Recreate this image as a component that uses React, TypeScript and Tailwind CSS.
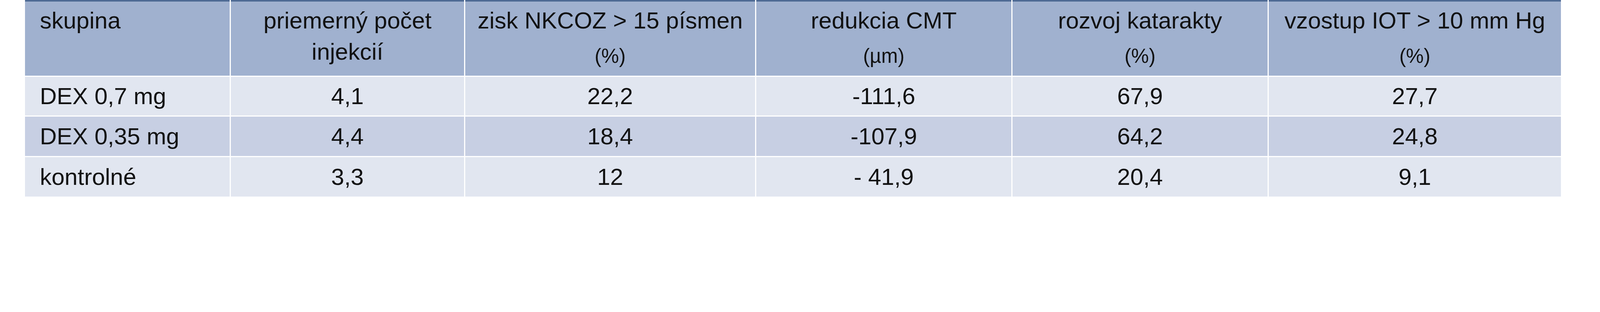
import React from "react";

const font = { fontFamily: "'Liberation Sans', Arial, sans-serif" };

type Head = { title: string; unit?: string; left?: boolean; wrap?: boolean };

const heads: Head[] = [
  { title: "skupina", left: true },
  { title: "priemerný počet injekcií", wrap: true },
  { title: "zisk NKCOZ > 15 písmen", unit: "(%)" },
  { title: "redukcia CMT", unit: "(µm)" },
  { title: "rozvoj katarakty", unit: "(%)" },
  { title: "vzostup IOT > 10 mm Hg", unit: "(%)" },
];

const rows: string[][] = [
  ["DEX 0,7 mg", "4,1", "22,2", "-111,6", "67,9", "27,7"],
  ["DEX 0,35 mg", "4,4", "18,4", "-107,9", "64,2", "24,8"],
  ["kontrolné", "3,3", "12", "- 41,9", "20,4", "9,1"],
];

export default function App() {
  return (
    <div className="w-full h-[619px] bg-white pl-[64px] text-[#111111]" style={font}>
      <div className="grid grid-cols-[524px_597px_742px_653px_653px_748px] grid-rows-[194px_99px_101px_101px] gap-[3px] w-[3932px]">
        {heads.map((h, i) => (
          <div
            key={i}
            className={
              "border-t-[4px] border-[#4e6a94] bg-[#a0b1cf] pt-[9px] flex flex-col " +
              (h.left ? "items-start pl-[38px]" : "items-center")
            }
          >
            <div
              className={
                "text-[60px] leading-[80px] " +
                (h.left ? "text-left whitespace-nowrap" : "text-center") +
                (h.wrap ? " max-w-[480px]" : " whitespace-nowrap")
              }
            >
              {h.title}
            </div>
            {h.unit && (
              <div className="text-[51px] leading-[59px] mt-[21px] whitespace-nowrap">{h.unit}</div>
            )}
          </div>
        ))}
        {rows.map((r, ri) =>
          r.map((c, ci) => (
            <div
              key={ri + "-" + ci}
              className={
                (ri === 1 ? "bg-[#c7cfe3] " : "bg-[#e1e6f0] ") +
                "flex items-center text-[60px] leading-none whitespace-nowrap " +
                (ci === 0 ? "justify-start pl-[38px]" : "justify-center")
              }
            >
              {c}
            </div>
          ))
        )}
      </div>
    </div>
  );
}
